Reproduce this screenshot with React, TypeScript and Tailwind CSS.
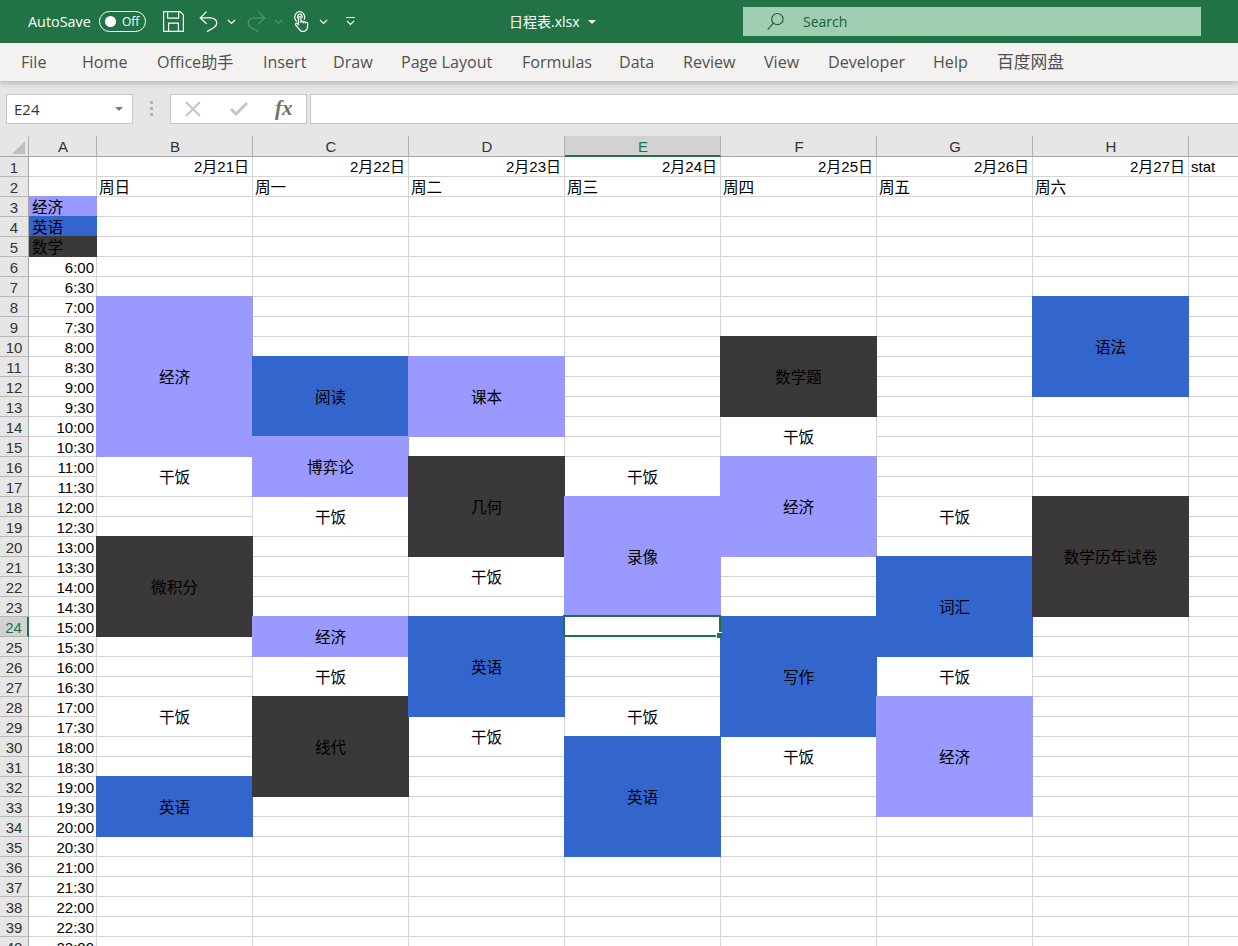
import { ReactNode } from "react";

type Block = { from: number; to: number; text?: string; fill?: string };
type Column = { letter: string; date?: string; weekday?: string; blocks: Block[] };

const PURPLE = "bg-[#9999ff]";
const BLUE = "bg-[#3366cc]";
const DARK = "bg-[#3a3838]";
const LAST_ROW = 40;

const COLUMNS: Column[] = [
  {
    letter: "B",
    date: "2月21日",
    weekday: "周日",
    blocks: [
      { from: 8, to: 15, text: "经济", fill: PURPLE },
      { from: 16, to: 17, text: "干饭" },
      { from: 20, to: 24, text: "微积分", fill: DARK },
      { from: 28, to: 29, text: "干饭" },
      { from: 32, to: 34, text: "英语", fill: BLUE },
    ],
  },
  {
    letter: "C",
    date: "2月22日",
    weekday: "周一",
    blocks: [
      { from: 11, to: 14, text: "阅读", fill: BLUE },
      { from: 15, to: 17, text: "博弈论", fill: PURPLE },
      { from: 18, to: 19, text: "干饭" },
      { from: 24, to: 25, text: "经济", fill: PURPLE },
      { from: 26, to: 27, text: "干饭" },
      { from: 28, to: 32, text: "线代", fill: DARK },
    ],
  },
  {
    letter: "D",
    date: "2月23日",
    weekday: "周二",
    blocks: [
      { from: 11, to: 14, text: "课本", fill: PURPLE },
      { from: 16, to: 20, text: "几何", fill: DARK },
      { from: 21, to: 22, text: "干饭" },
      { from: 24, to: 28, text: "英语", fill: BLUE },
      { from: 29, to: 30, text: "干饭" },
    ],
  },
  {
    letter: "E",
    date: "2月24日",
    weekday: "周三",
    blocks: [
      { from: 16, to: 17, text: "干饭" },
      { from: 18, to: 23, text: "录像", fill: PURPLE },
      { from: 24, to: 24 },
      { from: 28, to: 29, text: "干饭" },
      { from: 30, to: 35, text: "英语", fill: BLUE },
    ],
  },
  {
    letter: "F",
    date: "2月25日",
    weekday: "周四",
    blocks: [
      { from: 10, to: 13, text: "数学题", fill: DARK },
      { from: 14, to: 15, text: "干饭" },
      { from: 16, to: 20, text: "经济", fill: PURPLE },
      { from: 24, to: 29, text: "写作", fill: BLUE },
      { from: 30, to: 31, text: "干饭" },
    ],
  },
  {
    letter: "G",
    date: "2月26日",
    weekday: "周五",
    blocks: [
      { from: 18, to: 19, text: "干饭" },
      { from: 21, to: 25, text: "词汇", fill: BLUE },
      { from: 26, to: 27, text: "干饭" },
      { from: 28, to: 33, text: "经济", fill: PURPLE },
    ],
  },
  {
    letter: "H",
    date: "2月27日",
    weekday: "周六",
    blocks: [
      { from: 8, to: 12, text: "语法", fill: BLUE },
      { from: 18, to: 23, text: "数学历年试卷", fill: DARK },
    ],
  },
];

const TABS = [
  { label: "File", className: "w-[61px]" },
  { label: "Home", className: "w-[75px]" },
  { label: "Office助手", className: "w-[106px]" },
  { label: "Insert", className: "w-[70px]" },
  { label: "Draw", className: "w-[68px]" },
  { label: "Page Layout", className: "w-[121px]" },
  { label: "Formulas", className: "w-[97px]" },
  { label: "Data", className: "w-[64px]" },
  { label: "Review", className: "w-[81px]" },
  { label: "View", className: "w-[64px]" },
  { label: "Developer", className: "w-[105px]" },
  { label: "Help", className: "w-[64px]" },
  { label: "百度网盘", className: "w-[80px] text-[16.8px]" },
];

function timeLabel(row: number) {
  const minutes = 360 + (row - 6) * 30;
  return `${Math.floor(minutes / 60)}:${minutes % 60 === 0 ? "00" : "30"}`;
}

function range(from: number, to: number) {
  return Array.from({ length: to - from + 1 }, (_, i) => from + i);
}

function Chevron({ dim }: { dim?: boolean }) {
  return (
    <svg width="9" height="6" viewBox="0 0 9 6" fill="none" stroke={dim ? "#4f9570" : "#ffffff"} strokeWidth="1.2">
      <path d="M1 1l3.5 3.5L8 1" />
    </svg>
  );
}

function SaveIcon() {
  return (
    <svg width="21" height="21" viewBox="0 0 21 21" fill="none" stroke="#ffffff" strokeWidth="1.2">
      <path d="M.6.6h16.5l3.3 3.3v16.5H.6z" />
      <path d="M4.6.6v6.6h11V.6" />
      <path d="M5.6 20.4v-8.2h9.8v8.2" />
    </svg>
  );
}

function UndoIcon({ color, flip }: { color: string; flip?: boolean }) {
  return (
    <svg width="19" height="21" viewBox="0 0 19 21" fill="none" stroke={color} strokeWidth="1.3" className={flip ? "-scale-x-100" : ""}>
      <path d="M7.5.6L1.3 6.9l6.4 6" />
      <path d="M1.5 6.9h9.7c3.8 0 6.6 2.2 6.6 5 0 2.3-1.5 3.7-3.1 4.9L8 20.6" />
    </svg>
  );
}

function TouchIcon() {
  return (
    <svg width="16" height="22" viewBox="0 0 16 22" fill="none" stroke="#ffffff" strokeWidth="1.2">
      <path d="M2.7 10.5C1.4 9.5.7 8 .7 6.3.7 3.2 3 .7 5.7.7s5 2.5 5 5.6c0 .9-.2 1.7-.5 2.4" />
      <path d="M3.6 7.5c-.5-2.2.6-4.3 2.2-4.3s2.7 1.7 2.4 3.7" />
      <path d="M4.5 13.5V6.8c0-1.5 2.4-1.5 2.4 0v5.2m0-1c0-1.300 2.300-1.300 2.300 0v1.200m0-.7c0-1.200 2.200-1.200 2.200 0v.9m0-.4c0-1 2.200-1 2.200 0v3.500c0 2.300-1.300 3.800-3 4.800H7.100c-1.200-1-2.100-2.100-3.300-3.900L1.600 14c-.8-1.300.9-2.400 1.900-1.200l1 1.200" />
    </svg>
  );
}

function SheetCell({ block, letter }: { block: Block; letter: string }) {
  const rows = block.to - block.from + 1;
  if (block.fill) {
    return (
      <div
        className={`relative z-10 -mt-px -ml-px flex shrink-0 items-center justify-center pt-[2px] text-[15.6px] ${block.fill}`}
        style={{ height: rows * 20 + 1 }}
      >
        {block.text}
      </div>
    );
  }
  const selected = letter === "E" && block.from === 24;
  return (
    <div
      className="relative flex shrink-0 items-center justify-center border-r border-b border-[#d4d4d4] pt-[3px] text-[15.6px]"
      style={{ height: rows * 20 }}
    >
      {block.text}
      {selected && (
        <div className="absolute -top-[2px] -right-px -bottom-px -left-[2px] z-20 border-2 border-[#217346]">
          <div className="absolute -right-[3px] -bottom-[3px] h-[6px] w-[6px] border-t border-l border-white bg-[#217346]" />
        </div>
      )}
    </div>
  );
}

function DayColumn({ column }: { column: Column }) {
  const cells: ReactNode[] = [];
  let row = 3;
  while (row <= LAST_ROW) {
    const block = column.blocks.find((b) => b.from === row) ?? { from: row, to: row };
    cells.push(<SheetCell key={row} block={block} letter={column.letter} />);
    row = block.to + 1;
  }
  return (
    <div className="flex w-[156px] shrink-0 flex-col">
      <div className="flex h-5 shrink-0 items-center justify-end border-r border-b border-[#d4d4d4] pt-[2px] pr-[3px]">{column.date}</div>
      <div className="flex h-5 shrink-0 items-center border-r border-b border-[#d4d4d4] pt-[2px] pl-[2px] text-[15.6px]">{column.weekday}</div>
      {cells}
    </div>
  );
}

export default function App() {
  return (
    <div className="flex h-[946px] w-[1238px] flex-col overflow-hidden bg-[#e6e6e6] font-['Liberation_Sans','Noto_Sans_CJK_SC',sans-serif] text-[15px] text-black">
      {/* タイトルバー */}
      <div className="flex h-[43px] shrink-0 items-center bg-[#217346] font-['Open_Sans','Noto_Sans_CJK_SC',sans-serif] text-white">
        <span className="ml-[28px] w-[71px] text-[14.4px]">AutoSave</span>
        <div className="flex h-[21px] w-[47px] items-center rounded-full border border-white pl-[5px]">
          <div className="h-[11px] w-[11px] rounded-full bg-white" />
          <span className="ml-[6px] text-[12px]">Off</span>
        </div>
        <div className="ml-[17px]"><SaveIcon /></div>
        <div className="ml-[15px]"><UndoIcon color="#ffffff" /></div>
        <div className="ml-[9px]"><Chevron /></div>
        <div className="ml-[11px]"><UndoIcon color="#4f9570" flip /></div>
        <div className="ml-[8px]"><Chevron dim /></div>
        <div className="ml-[11px]"><TouchIcon /></div>
        <div className="ml-[9px]"><Chevron /></div>
        <div className="ml-[18px] flex flex-col items-center gap-[2px]">
          <div className="h-px w-[9px] bg-white" />
          <Chevron />
        </div>
        <span className="ml-[154px] w-[79px] text-[14px]">日程表.xlsx</span>
        <div className="h-0 w-0 border-x-[4px] border-t-[4px] border-x-transparent border-t-white" />
        <div className="ml-[147px] flex h-[29px] w-[458px] items-center bg-[#9fceb3] pl-[24px] text-[14px] text-[#1d5c3b]">
          <svg width="17" height="19" viewBox="0 0 18 19" fill="none" stroke="#1d5c3b" strokeWidth="1.2">
            <circle cx="11" cy="7" r="6" />
            <path d="M6.7 11.3L.8 18" />
          </svg>
          <span className="ml-[19px]">Search</span>
        </div>
      </div>

      {/* タブ */}
      <div className="relative z-30 flex h-[38px] shrink-0 items-center bg-[#f3f2f1] pl-[21px] font-['Open_Sans','Noto_Sans_CJK_SC',sans-serif] text-[16.1px] text-[#505050] shadow-[0_2px_6px_rgba(0,0,0,0.22)]">
        {TABS.map((tab) => (
          <span key={tab.label} className={`shrink-0 whitespace-nowrap ${tab.className}`}>{tab.label}</span>
        ))}
      </div>

      {/* 数式バー */}
      <div className="flex h-[43px] shrink-0 items-end pl-[6px]">
        <div className="flex h-[30px] w-[127px] items-center justify-between border border-[#c6c6c6] bg-white pr-[9px] pl-[7px] font-['Open_Sans',sans-serif] text-[15px] text-[#333333]">
          E24
          <div className="h-0 w-0 border-x-[4px] border-t-[4px] border-x-transparent border-t-[#7a7a7a]" />
        </div>
        <div className="mb-[8px] ml-[17px] flex w-[3px] flex-col gap-[3px]">
          <div className="h-[3px] w-[3px] bg-[#b4b4b4]" />
          <div className="h-[3px] w-[3px] bg-[#b4b4b4]" />
          <div className="h-[3px] w-[3px] bg-[#b4b4b4]" />
        </div>
        <div className="ml-[17px] flex h-[30px] w-[137px] items-center border border-[#c6c6c6] bg-white pl-[14px]">
          <svg width="16" height="16" viewBox="0 0 16 16" fill="none" stroke="#c6c6c6" strokeWidth="2">
            <path d="M1 1l14 14M15 1L1 15" />
          </svg>
          <svg className="ml-[29px]" width="18" height="14" viewBox="0 0 18 14" fill="none" stroke="#c6c6c6" strokeWidth="3">
            <path d="M1 7l5 5L17 1" />
          </svg>
          <span className="ml-[27px] font-['Liberation_Serif',serif] text-[21px] font-bold text-[#707070] italic">fx</span>
        </div>
        <div className="ml-[3px] h-[30px] flex-1 border-y border-l border-[#c6c6c6] bg-white" />
      </div>

      <div className="h-[12px] shrink-0" />

      {/* 列見出し */}
      <div className="flex h-[21px] shrink-0 border-b border-[#a6a6a6]">
        <div className="flex h-full w-[29px] shrink-0 items-end justify-end border-r border-[#b0b0b0] pr-[3px] pb-[2px]">
          <div className="h-0 w-0 border-t-[13px] border-r-[13px] border-t-transparent border-r-[#c0c0c0]" />
        </div>
        <div className="flex w-[68px] shrink-0 items-center justify-center border-r border-[#b0b0b0] pt-[3px] pl-px text-[#333333]">A</div>
        {COLUMNS.map((c) => (
          <div
            key={c.letter}
            className={c.letter === "E"
              ? "-mb-px flex h-[21px] w-[156px] shrink-0 items-center justify-center border-r border-b-2 border-r-[#b0b0b0] border-b-[#217346] bg-[#d2d2d2] pt-[3px] pl-px text-[#217346]"
              : "flex w-[156px] shrink-0 items-center justify-center border-r border-[#b0b0b0] pt-[3px] pl-px text-[#333333]"}
          >
            {c.letter}
          </div>
        ))}
        <div className="flex-1" />
      </div>

      {/* シート */}
      <div className="flex min-h-0 flex-1 overflow-hidden bg-white">
        <div className="flex w-[29px] shrink-0 flex-col">
          {range(1, LAST_ROW).map((row) => (
            <div
              key={row}
              className={row === 24
                ? "flex h-5 shrink-0 items-center justify-center border-r-2 border-b border-r-[#217346] border-b-[#b0b0b0] bg-[#d2d2d2] pt-[4px] text-[#217346]"
                : "flex h-5 shrink-0 items-center justify-center border-r border-b border-r-[#a6a6a6] border-b-[#b8b8b8] bg-[#e6e6e6] pt-[4px] text-[#333333]"}
            >
              {row}
            </div>
          ))}
        </div>

        <div className="flex w-[68px] shrink-0 flex-col">
          <div className="h-5 shrink-0 border-r border-b border-[#d4d4d4]" />
          <div className="h-5 shrink-0 border-r border-b border-[#d4d4d4]" />
          <div className={`relative z-10 -mt-px flex h-[21px] shrink-0 items-center pt-[3px] pl-[3px] text-[15.6px] ${PURPLE}`}>经济</div>
          <div className={`relative z-10 -mt-px flex h-[21px] shrink-0 items-center pt-[3px] pl-[3px] text-[15.6px] ${BLUE}`}>英语</div>
          <div className={`relative z-10 -mt-px flex h-[21px] shrink-0 items-center pt-[3px] pl-[3px] text-[15.6px] ${DARK}`}>数学</div>
          {range(6, LAST_ROW).map((row) => (
            <div key={row} className="flex h-5 shrink-0 items-center justify-end border-r border-b border-[#d4d4d4] pt-[3px] pr-[2px]">
              {timeLabel(row)}
            </div>
          ))}
        </div>

        {COLUMNS.map((c) => (
          <DayColumn key={c.letter} column={c} />
        ))}

        <div className="flex w-[60px] shrink-0 flex-col">
          {range(1, LAST_ROW).map((row) => (
            <div key={row} className="flex h-5 shrink-0 items-center border-b border-[#d4d4d4] pt-[2px] pl-[2px]">
              {row === 1 ? "stat" : ""}
            </div>
          ))}
        </div>
      </div>
    </div>
  );
}
